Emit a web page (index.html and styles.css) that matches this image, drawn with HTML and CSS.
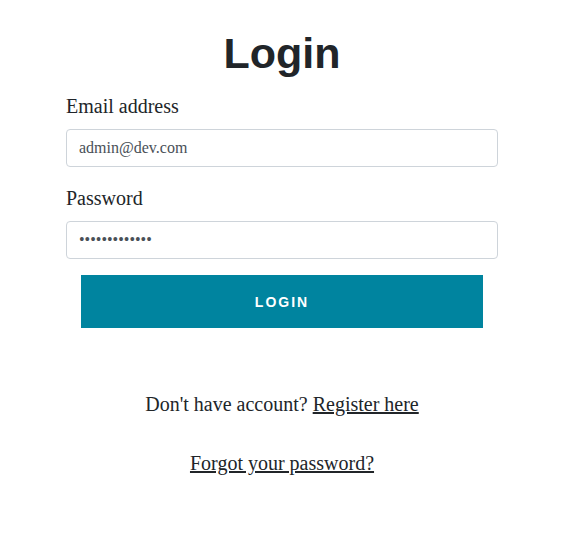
FILE: index.html
```html
<!DOCTYPE html>
<html lang="en">
<head>
<meta charset="utf-8">
<title>Login</title>
<link rel="stylesheet" href="styles.css">
</head>
<body>
<main class="login">
  <h1 class="login-title">Login</h1>
  <form class="login-form">
    <label class="field-label" for="email">Email address</label>
    <input class="field-input" id="email" type="email" value="admin@dev.com">
    <label class="field-label field-label--second" for="password">Password</label>
    <input class="field-input" id="password" type="password" value="secretpass123">
    <button class="login-button" type="button">LOGIN</button>
  </form>
  <p class="register-line">Don't have account? <a href="#" class="link">Register here</a></p>
  <p class="forgot-line"><a href="#" class="link">Forgot your password?</a></p>
</main>
</body>
</html>
```
FILE: styles.css
```css
html, body {
  margin: 0;
  padding: 0;
  background: #ffffff;
}
body {
  font-family: "Liberation Serif", "Times New Roman", serif;
  color: #212529;
}
.login {
  width: 432px;
  margin-left: 66px;
  display: flex;
  flex-direction: column;
}
.login-title {
  margin: 27px 0 0;
  font-family: "Liberation Sans", Arial, sans-serif;
  font-weight: 700;
  font-size: 43px;
  line-height: 52px;
  text-align: center;
  color: #212529;
}
.login-form {
  display: flex;
  flex-direction: column;
  margin-top: 15px;
}
.field-label {
  font-size: 20px;
  line-height: 24px;
  color: #212529;
  margin-bottom: 11px;
}
.field-label--second {
  margin-top: 19px;
}
.field-input {
  box-sizing: border-box;
  height: 38px;
  width: 100%;
  border: 1px solid #ced4da;
  border-radius: 4px;
  padding: 0 12px;
  font-family: "Liberation Serif", "Times New Roman", serif;
  font-size: 16px;
  color: #495057;
  background: #fff;
  outline: none;
}
.login-button {
  margin: 16px 15px 0;
  height: 53px;
  border: 0;
  background: #00849f;
  color: #ffffff;
  font-family: "Liberation Sans", Arial, sans-serif;
  font-weight: 700;
  font-size: 14px;
  letter-spacing: 2px;
  cursor: pointer;
}
.register-line {
  margin: 64px 0 0;
  font-size: 20px;
  line-height: 24px;
  text-align: center;
}
.forgot-line {
  margin: 35px 0 0;
  font-size: 20px;
  line-height: 24px;
  text-align: center;
}
.link {
  color: #212529;
  text-decoration: underline;
}
```
